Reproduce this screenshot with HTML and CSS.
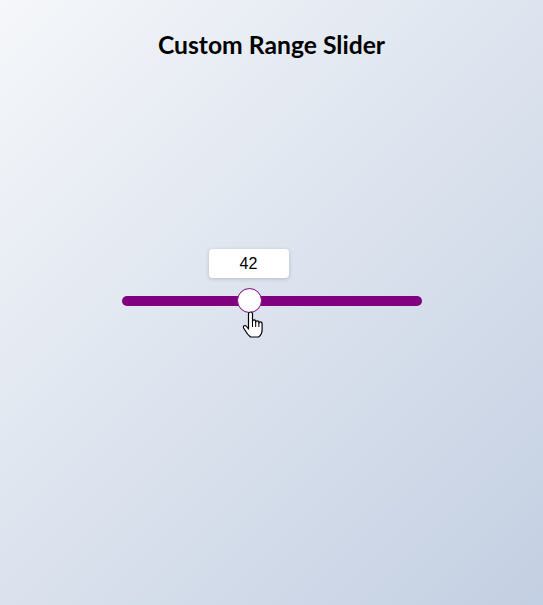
FILE: index.html
```html
<!DOCTYPE html>
<html lang="en">
<head>
<meta charset="utf-8">
<title>Custom Range Slider</title>
<link rel="stylesheet" href="styles.css">
</head>
<body>
  <h1 class="title">Custom Range Slider</h1>
  <main class="stage">
    <div class="slider">
      <div class="bubble" style="left: 127px;">42</div>
      <input class="range" type="range" min="0" max="100" value="42">
      <svg class="cursor" style="left: 120px;" width="22" height="28" viewBox="0 0 22 28" aria-hidden="true">
        <path d="M6.5,3 a2,2 0 0 1 4,0 V10.5 a1.6,1.6 0 0 1 3.2,0 v1 a1.6,1.6 0 0 1 3.2,0 v1 a1.6,1.6 0 0 1 3.2,0 V19 c0,3 -1.5,5.5 -3.5,7 H8.5 c-2,-1.5 -4,-4 -6,-7.5 l-1,-1.8 a1.6,1.6 0 0 1 2.6,-1.7 L6.5,18 Z" fill="#fff" stroke="#000" stroke-width="1.2" stroke-linejoin="round"/>
        <path d="M10.5,10.5 V16 M13.7,11.5 V16 M16.9,12.5 V16" fill="none" stroke="#000" stroke-width="1"/>
      </svg>
    </div>
  </main>
</body>
</html>
```
FILE: styles.css
```css
html, body {
  height: 100%;
}
body {
  margin: 0;
  background: linear-gradient(135deg, #f5f7fa 0%, #c3cfe2 100%);
  font-family: Lato, "Liberation Sans", sans-serif;
  display: flex;
  flex-direction: column;
  align-items: center;
}
.title {
  margin: 32px 0 0;
  font-size: 24.7px;
  font-weight: 700;
  color: #000;
  line-height: 26px;
}
.stage {
  flex: 1;
  display: flex;
  align-items: flex-start;
  justify-content: center;
  padding-top: 191px;
}
.slider {
  position: relative;
  width: 300px;
  padding-top: 10px;
}
.bubble {
  position: absolute;
  top: 0;
  transform: translateX(-50%);
  width: 80px;
  height: 29px;
  background: #fff;
  border-radius: 4px;
  box-shadow: 0 1px 4px rgba(0, 0, 0, 0.18);
  font-family: Arial, "Liberation Sans", sans-serif;
  font-size: 16px;
  line-height: 29px;
  text-align: center;
  color: #000;
}
.range {
  -webkit-appearance: none;
  appearance: none;
  display: block;
  margin: 29px 0 0;
  width: 300px;
  height: 25px;
  background: transparent;
  outline: none;
}
.range::-webkit-slider-runnable-track {
  height: 10px;
  background: #800080;
  border-radius: 5px;
}
.range::-webkit-slider-thumb {
  -webkit-appearance: none;
  appearance: none;
  width: 25px;
  height: 25px;
  margin-top: -7.5px;
  border-radius: 50%;
  background: #fff;
  border: 1px solid #800080;
  box-sizing: border-box;
}
.range::-moz-range-track {
  height: 10px;
  background: #800080;
  border-radius: 5px;
}
.range::-moz-range-thumb {
  width: 25px;
  height: 25px;
  border-radius: 50%;
  background: #fff;
  border: 1px solid #800080;
  box-sizing: border-box;
}
.cursor {
  position: absolute;
  top: 62px;
  pointer-events: none;
}
```
